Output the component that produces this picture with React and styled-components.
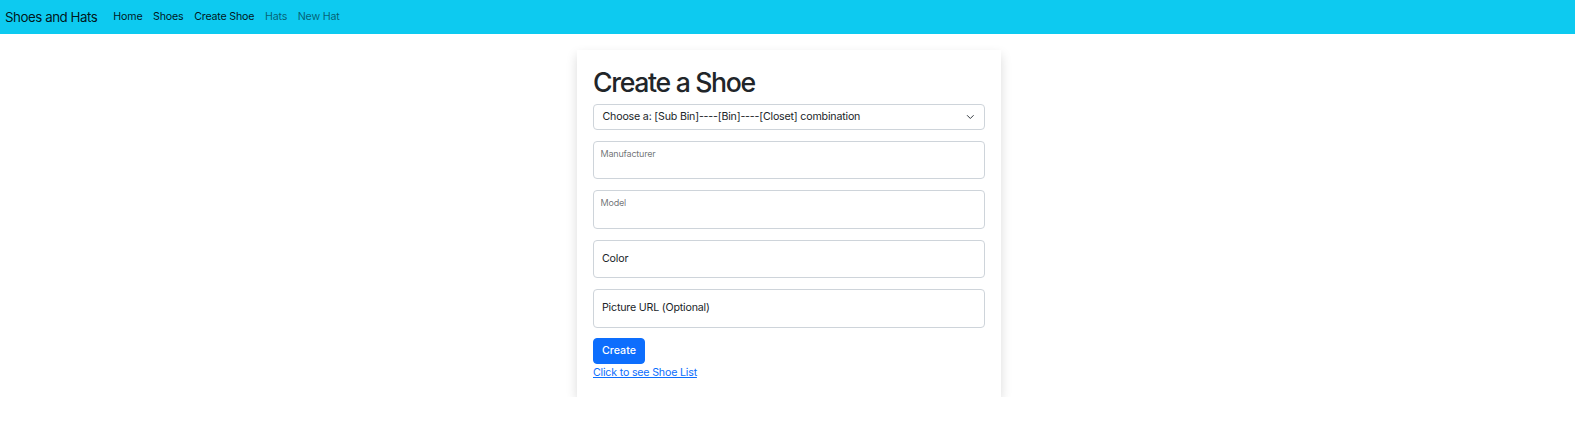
import React from "react";
import styled, { createGlobalStyle } from "styled-components";

const GlobalStyle = createGlobalStyle`
  * { box-sizing: border-box; }
  body {
    margin: 0;
    background: #fff;
    font-family: Inter, "Noto Sans", "Liberation Sans", sans-serif;
    color: #212529;
    font-size: 10.67px;
    line-height: 1.5;
    letter-spacing: -0.018em;
  }
`;

const NavBar = styled.nav`
  height: 34px;
  background: #0dcaf0;
  display: flex;
  align-items: center;
  padding: 0 5px;
`;

const Brand = styled.a`
  font-size: 13.33px;
  letter-spacing: -0.035em;
  color: rgba(0, 0, 0, 0.9);
  text-decoration: none;
  margin-right: 10.67px;
  line-height: 20px;
  padding-bottom: 1px;
`;

const NavList = styled.div`
  display: flex;
  align-items: center;
`;

const NavItem = styled.a`
  font-size: 10.67px;
  padding: 0 5.33px;
  text-decoration: none;
  color: ${(p) => (p.$muted ? "rgba(0,0,0,0.55)" : "rgba(0,0,0,0.9)")};
`;

const Main = styled.main`
  display: flex;
  justify-content: center;
  padding: 16px 0 0 3px;
`;

const Card = styled.div`
  width: 424px;
  background: #fff;
  padding: 16px;
  box-shadow: 0 5.33px 10.67px rgba(0, 0, 0, 0.15);
`;

const Title = styled.h1`
  margin: 0 0 5.33px;
  font-size: 26.67px;
  font-weight: 500;
  letter-spacing: -0.05em;
  line-height: 33px;
  color: #212529;
`;

const SelectBox = styled.div`
  height: 25.33px;
  margin-bottom: 11px;
  border: 1px solid #ced4da;
  border-radius: 4px;
  display: flex;
  align-items: center;
  justify-content: space-between;
  padding: 0 8px 0 8.5px;
  font-size: 10.67px;
  color: #212529;
`;

const Chevron = styled.svg`
  width: 10.67px;
  height: 8px;
`;

const Field = styled.div`
  position: relative;
  margin-bottom: 10.8px;
`;

const Input = styled.input`
  display: block;
  width: 100%;
  height: 38.67px;
  border: 1px solid #ced4da;
  border-radius: 4px;
  background: #fff;
  font: inherit;
  padding: 0 8px;
  outline: none;
`;

const FloatLabel = styled.label`
  position: absolute;
  pointer-events: none;
  color: ${(p) => (p.$small ? "rgba(33,37,41,0.65)" : "#212529")};
  font-size: ${(p) => (p.$small ? "9px" : "10.67px")};
  line-height: 1.5;
  ${(p) =>
    p.$small
      ? "top: 6px; left: 7.5px;"
      : "left: 9px; top: 50%; transform: translateY(-50%);"}
`;

const Button = styled.button`
  display: block;
  height: 25.33px;
  padding: 0 8px;
  border: 1px solid #0d6efd;
  border-radius: 4px;
  background: #0d6efd;
  color: #fff;
  font: inherit;
  font-weight: 500;
  font-size: 10.67px;
  cursor: pointer;
`;

const ListLink = styled.a`
  color: #0d6efd;
  text-decoration: underline;
  font-size: 10.67px;
  line-height: 16px;
  display: inline-block;
  margin-top: 1px;
`;

const fields = [
  { label: "Manufacturer", small: true },
  { label: "Model", small: true },
  { label: "Color", small: false },
  { label: "Picture URL (Optional)", small: false },
];

export default function App() {
  return (
    <>
      <GlobalStyle />
      <NavBar>
        <Brand href="#">Shoes and Hats</Brand>
        <NavList>
          <NavItem href="#">Home</NavItem>
          <NavItem href="#">Shoes</NavItem>
          <NavItem href="#">Create Shoe</NavItem>
          <NavItem href="#" $muted>Hats</NavItem>
          <NavItem href="#" $muted>New Hat</NavItem>
        </NavList>
      </NavBar>
      <Main>
        <Card>
          <Title>Create a Shoe</Title>
          <SelectBox>
            <span>Choose a: [Sub Bin]----[Bin]----[Closet] combination</span>
            <Chevron viewBox="0 0 16 16">
              <path
                d="m2 5 6 6 6-6"
                fill="none"
                stroke="#343a40"
                strokeWidth="2"
                strokeLinecap="round"
                strokeLinejoin="round"
              />
            </Chevron>
          </SelectBox>
          {fields.map((f) => (
            <Field key={f.label}>
              <Input aria-label={f.label} />
              <FloatLabel $small={f.small}>{f.label}</FloatLabel>
            </Field>
          ))}
          <Button>Create</Button>
          <ListLink href="#">Click to see Shoe List</ListLink>
        </Card>
      </Main>
    </>
  );
}
